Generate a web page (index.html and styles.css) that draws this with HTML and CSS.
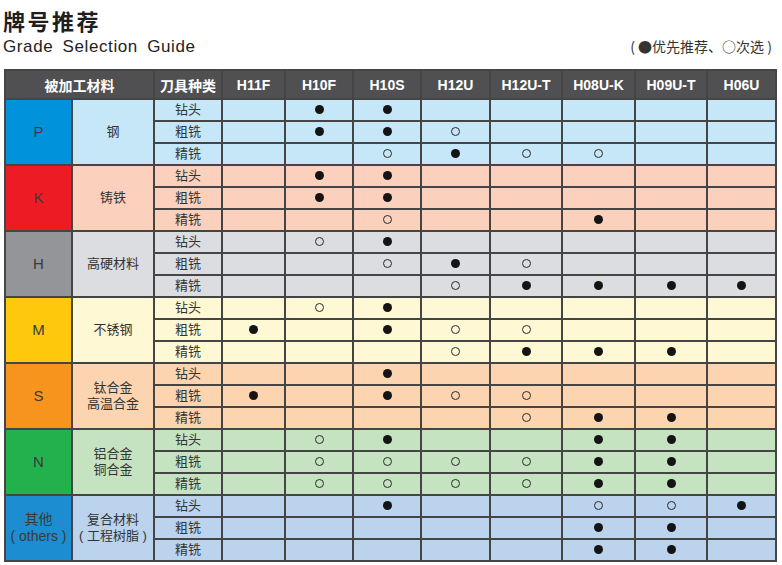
FILE: index.html
```html
<!DOCTYPE html>
<html lang="zh">
<head>
<meta charset="utf-8">
<title>牌号推荐</title>
<link rel="stylesheet" href="styles.css">
</head>
<body>
<div class="page">
  <h1 class="title">牌号推荐</h1>
  <div class="subline">
    <span class="subtitle">Grade Selection Guide</span>
    <span class="legend">( ●优先推荐、○次选 )</span>
  </div>
  <table class="grid">
    <colgroup>
      <col class="c-letter"><col class="c-mat"><col class="c-tool">
      <col class="c1"><col class="c2"><col class="c3"><col class="c4"><col class="c5"><col class="c6"><col class="c7"><col class="c8">
    </colgroup>
    <thead>
      <tr>
        <th colspan="2">被加工材料</th><th>刀具种类</th>
        <th>H11F</th><th>H10F</th><th>H10S</th><th>H12U</th><th>H12U-T</th><th>H08U-K</th><th>H09U-T</th><th>H06U</th>
      </tr>
    </thead>
    <tbody>
      <tr class="g-p"><td rowspan="3" class="letter">P</td><td rowspan="3" class="mat">钢</td><td>钻头</td>
        <td></td><td><span class="f"></span></td><td><span class="f"></span></td><td></td><td></td><td></td><td></td><td></td></tr>
      <tr class="g-p"><td>粗铣</td>
        <td></td><td><span class="f"></span></td><td><span class="f"></span></td><td><span class="o"></span></td><td></td><td></td><td></td><td></td></tr>
      <tr class="g-p"><td>精铣</td>
        <td></td><td></td><td><span class="o"></span></td><td><span class="f"></span></td><td><span class="o"></span></td><td><span class="o"></span></td><td></td><td></td></tr>

      <tr class="g-k"><td rowspan="3" class="letter">K</td><td rowspan="3" class="mat">铸铁</td><td>钻头</td>
        <td></td><td><span class="f"></span></td><td><span class="f"></span></td><td></td><td></td><td></td><td></td><td></td></tr>
      <tr class="g-k"><td>粗铣</td>
        <td></td><td><span class="f"></span></td><td><span class="f"></span></td><td></td><td></td><td></td><td></td><td></td></tr>
      <tr class="g-k"><td>精铣</td>
        <td></td><td></td><td><span class="o"></span></td><td></td><td></td><td><span class="f"></span></td><td></td><td></td></tr>

      <tr class="g-h"><td rowspan="3" class="letter">H</td><td rowspan="3" class="mat">高硬材料</td><td>钻头</td>
        <td></td><td><span class="o"></span></td><td><span class="f"></span></td><td></td><td></td><td></td><td></td><td></td></tr>
      <tr class="g-h"><td>粗铣</td>
        <td></td><td></td><td><span class="o"></span></td><td><span class="f"></span></td><td><span class="o"></span></td><td></td><td></td><td></td></tr>
      <tr class="g-h"><td>精铣</td>
        <td></td><td></td><td></td><td><span class="o"></span></td><td><span class="f"></span></td><td><span class="f"></span></td><td><span class="f"></span></td><td><span class="f"></span></td></tr>

      <tr class="g-m"><td rowspan="3" class="letter">M</td><td rowspan="3" class="mat">不锈钢</td><td>钻头</td>
        <td></td><td><span class="o"></span></td><td><span class="f"></span></td><td></td><td></td><td></td><td></td><td></td></tr>
      <tr class="g-m"><td>粗铣</td>
        <td><span class="f"></span></td><td></td><td><span class="f"></span></td><td><span class="o"></span></td><td><span class="o"></span></td><td></td><td></td><td></td></tr>
      <tr class="g-m"><td>精铣</td>
        <td></td><td></td><td></td><td><span class="o"></span></td><td><span class="f"></span></td><td><span class="f"></span></td><td><span class="f"></span></td><td></td></tr>

      <tr class="g-s"><td rowspan="3" class="letter">S</td><td rowspan="3" class="mat">钛合金<br>高温合金</td><td>钻头</td>
        <td></td><td></td><td><span class="f"></span></td><td></td><td></td><td></td><td></td><td></td></tr>
      <tr class="g-s"><td>粗铣</td>
        <td><span class="f"></span></td><td></td><td><span class="f"></span></td><td><span class="o"></span></td><td><span class="o"></span></td><td></td><td></td><td></td></tr>
      <tr class="g-s"><td>精铣</td>
        <td></td><td></td><td></td><td></td><td><span class="o"></span></td><td><span class="f"></span></td><td><span class="f"></span></td><td></td></tr>

      <tr class="g-n"><td rowspan="3" class="letter">N</td><td rowspan="3" class="mat">铝合金<br>铜合金</td><td>钻头</td>
        <td></td><td><span class="o"></span></td><td><span class="f"></span></td><td></td><td></td><td><span class="f"></span></td><td><span class="f"></span></td><td></td></tr>
      <tr class="g-n"><td>粗铣</td>
        <td></td><td><span class="o"></span></td><td><span class="o"></span></td><td><span class="o"></span></td><td><span class="o"></span></td><td><span class="f"></span></td><td><span class="f"></span></td><td></td></tr>
      <tr class="g-n"><td>精铣</td>
        <td></td><td><span class="o"></span></td><td><span class="o"></span></td><td><span class="o"></span></td><td><span class="o"></span></td><td><span class="f"></span></td><td><span class="f"></span></td><td></td></tr>

      <tr class="g-x"><td rowspan="3" class="letter small">其他<br>( others )</td><td rowspan="3" class="mat">复合材料<br>( 工程树脂 )</td><td>钻头</td>
        <td></td><td></td><td><span class="f"></span></td><td></td><td></td><td><span class="o"></span></td><td><span class="o"></span></td><td><span class="f"></span></td></tr>
      <tr class="g-x"><td>粗铣</td>
        <td></td><td></td><td></td><td></td><td></td><td><span class="f"></span></td><td><span class="f"></span></td><td></td></tr>
      <tr class="g-x"><td>精铣</td>
        <td></td><td></td><td></td><td></td><td></td><td><span class="f"></span></td><td><span class="f"></span></td><td></td></tr>
    </tbody>
  </table>
</div>
</body>
</html>
```
FILE: styles.css
```css
* { box-sizing: border-box; }
html, body { margin: 0; padding: 0; background: #fff; }
body {
  font-family: "Liberation Sans", "Noto Sans CJK SC", sans-serif;
  color: #222;
}
.page {
  width: 782px;
  padding: 7px 7px 0 4px;
}
.title {
  margin: 0 0 0 -1px;
  font-family: "Noto Sans CJK SC", sans-serif;
  font-size: 22px;
  line-height: 26px;
  font-weight: 700;
  letter-spacing: 2.5px;
  color: #1e1e1e;
}
.subline {
  display: flex;
  justify-content: space-between;
  align-items: baseline;
  margin-top: 3px;
  height: 20px;
}
.subtitle {
  font-size: 17px;
  line-height: 20px;
  letter-spacing: 0.6px;
  word-spacing: 4px;
  color: #222;
  margin-left: -1px;
}
.legend {
  font-family: "Noto Sans CJK SC", sans-serif;
  font-size: 14px;
  line-height: 20px;
  color: #333;
  margin-right: 3px;
}
.grid {
  margin-top: 13px;
  width: 771px;
  table-layout: fixed;
  border-collapse: collapse;
  font-family: "Liberation Sans", "Noto Sans CJK SC", sans-serif;
}
.c-letter { width: 67px; }
.c-mat { width: 82px; }
.c-tool { width: 68px; }
.c1 { width: 63px; }
.c2 { width: 68px; }
.c3 { width: 68px; }
.c4 { width: 69px; }
.c5 { width: 72px; }
.c6 { width: 73px; }
.c7 { width: 72px; }
.c8 { width: 69px; }

.grid th, .grid td {
  border: 2px solid #454545;
  text-align: center;
  vertical-align: middle;
  padding: 0;
}
.grid th {
  background: #505052;
  color: #fff;
  font-weight: 700;
  font-size: 14px;
  height: 29px;
}
.grid td {
  height: 22px;
  font-family: "Liberation Sans", "Noto Sans CJK SC", sans-serif;
  font-size: 13px;
  line-height: 16px;
  color: #333;
}
.grid td.letter {
  font-size: 15px;
  color: #3a3a3a;
}
.grid td.letter.small {
  font-size: 14px;
  line-height: 17px;
  white-space: nowrap;
}
.grid td.mat {
  line-height: 16px;
  white-space: nowrap;
}

.f, .o {
  display: inline-block;
  width: 9px;
  height: 9px;
  border-radius: 50%;
  vertical-align: middle;
  margin-top: -2px;
}
.f { background: #141414; }
.o { border: 1px solid #2a2a2a; }

.g-p td { background: #c6e7f8; }
.g-p td.letter { background: #0093dc; }
.g-k td { background: #fbd1bd; }
.g-k td.letter { background: #ed1c24; }
.g-h td { background: #dcdde0; }
.g-h td.letter { background: #939598; }
.g-m td { background: #fff8d5; }
.g-m td.letter { background: #fec90d; }
.g-s td { background: #fcd5b0; }
.g-s td.letter { background: #f7941d; }
.g-n td { background: #c5e3c1; }
.g-n td.letter { background: #22b14c; }
.g-x td { background: #bcd3ed; }
.g-x td.letter { background: #1b8dd0; }
```
